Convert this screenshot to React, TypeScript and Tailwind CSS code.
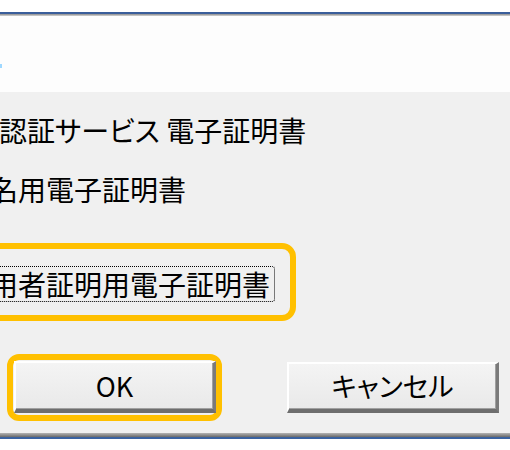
import React from "react";

const FONT = "font-['MS_UI_Gothic','Noto_Sans_CJK_JP',sans-serif]";

// classic 3D push button, enlarged
const Btn = ({ label, className }: { label: string; className?: string }) => (
  <button
    className={`flex items-center justify-center bg-gradient-to-b from-[#f4f4f4] to-[#e9e9e9] border-t-2 border-l-2 border-t-white border-l-white border-r-[3px] border-b-[4px] border-r-[#7a7a7a] border-b-[#6e6e6e] shadow-[inset_-1px_-1px_0_#a0a0a0] text-[27px] leading-none text-black ${className ?? ""}`}
  >
    <span className="[font-feature-settings:'palt'] -mt-[2px]">{label}</span>
  </button>
);

export default function App() {
  return (
    <div className={`w-[510px] h-[450px] overflow-hidden flex flex-col bg-white ${FONT}`}>
      {/* window above, cut off */}
      <div className="h-[12px] bg-white" />
      <div className="h-[2px] bg-[#3a5e9a]" />
      <div className="h-[2px] bg-gradient-to-b from-[#8c8c8c] to-[#d4d4d4]" />

      {/* dialog header */}
      <div className="h-[76px] bg-[#fdfdfd] relative">
        <div className="absolute left-0 top-[48px] w-[2px] h-[4px] bg-[#9fd8ff]" />
      </div>

      {/* dialog body */}
      <div className="flex-1 bg-[#f0f0f0] flex flex-col pt-[22px] text-black text-[28px] leading-[32px]">
        <div className="-ml-[29px] whitespace-nowrap">
          人認証<span className="[font-feature-settings:'palt']">サービス</span> 電子証明書
        </div>
        <div className="-ml-[38px] mt-[27px] whitespace-nowrap">署名用電子証明書</div>

        {/* focused item with highlight */}
        <div className="-ml-[30px] mt-[38px] w-[326px] h-[78px] border-[6px] border-[#ffc000] rounded-[14px] flex items-center">
          <div className="-ml-[21px] mt-[3px] border border-dotted border-black rounded-[3px] pl-[6px] pr-[4px] py-[1px] whitespace-nowrap leading-[32px]">
            利用者証明用電子証明書
          </div>
        </div>

        {/* buttons */}
        <div className="mt-[33px] flex items-center">
          <div className="ml-[7px] w-[215px] h-[67px] border-[6px] border-[#ffc000] rounded-[12px] flex items-start pt-[1px] pl-[1px]">
            <Btn label="OK" className="w-[204px] h-[52px]" />
          </div>
          <Btn label="キャンセル" className="ml-[65px] w-[212px] h-[51px]" />
        </div>
      </div>

      {/* bottom edge of dialog */}
      <div className="h-[4px] bg-gradient-to-b from-[#b4b4b4] to-[#6a6a6a]" />
      <div className="h-[2px] bg-[#3a62a0]" />
      <div className="h-[11px] bg-white" />
    </div>
  );
}
